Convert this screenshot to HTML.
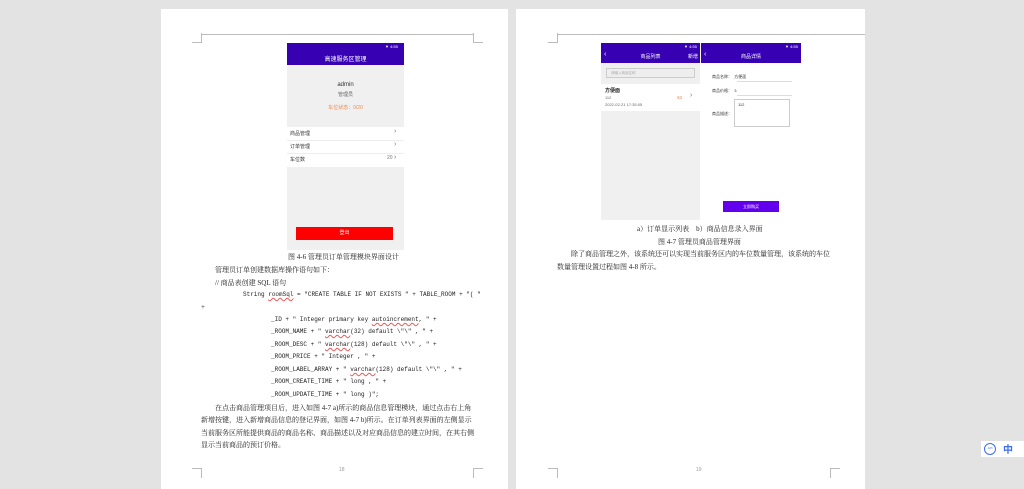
<!DOCTYPE html>
<html><head><meta charset="utf-8"><style>
*{margin:0;padding:0;box-sizing:border-box}
body{width:1024px;height:483px;background:#e3e3e3;position:relative;overflow:hidden;font-family:"Liberation Sans","Noto Sans CJK SC",sans-serif}
.pg{position:absolute;background:#fff;top:9px;height:480px}
.a{position:absolute;white-space:nowrap}
.t{font-family:"Liberation Serif","Noto Serif CJK SC",serif;font-size:7px;color:#222}
.c{font-family:"Liberation Mono","Noto Serif CJK SC",monospace;font-size:6px;color:#222}
.hl{position:absolute;height:1px;background:#bbb}
.cm{position:absolute;width:10px;height:10px;border-color:#bbb;border-style:solid;border-width:0}
.red{text-decoration:underline wavy #e55;}
</style></head><body>
<div class="pg" style="left:161px;width:347px"></div>
<div class="pg" style="left:516px;width:349px"></div>
<div class="hl" style="left:201px;top:34px;width:273px"></div>
<div class="cm" style="left:192px;top:33px;border-right-width:1px;border-bottom-width:1px"></div>
<div class="cm" style="left:473px;top:33px;border-left-width:1px;border-bottom-width:1px"></div>
<div class="cm" style="left:192px;top:468px;border-top-width:1px;border-right-width:1px"></div>
<div class="cm" style="left:473px;top:468px;border-top-width:1px;border-left-width:1px"></div>
<div class="a" style="left:339px;top:467px;font-size:5px;color:#999">18</div>
<div class="a" style="left:287px;top:43px;width:117px;height:207px;background:#f0f0f0"></div>
<div class="a" style="left:287px;top:43px;width:117px;height:22px;background:#3700b3"></div>
<div class="a" style="left:385px;top:44px;font-size:4px;color:#fff">▼ 4:55</div>
<div class="a" style="left:287px;top:54px;width:117px;text-align:center;font-size:6px;color:#fff">高速服务区管理</div>
<div class="a" style="left:287px;top:82px;width:117px;text-align:center;font-size:6px;color:#333">admin</div>
<div class="a" style="left:287px;top:91px;width:117px;text-align:center;font-size:5px;color:#666">管理员</div>
<div class="a" style="left:287px;top:104px;width:117px;text-align:center;font-size:5px;color:#f08a4b">车位状态：0/20</div>
<div class="a" style="left:287px;top:127px;width:117px;height:40px;background:#fff"></div>
<div class="a" style="left:287px;top:140px;width:117px;height:1px;background:#eee"></div>
<div class="a" style="left:287px;top:153px;width:117px;height:1px;background:#eee"></div>
<div class="a" style="left:290px;top:130px;font-size:5px;color:#333">商品管理</div>
<div class="a" style="left:290px;top:143px;font-size:5px;color:#333">订单管理</div>
<div class="a" style="left:290px;top:156px;font-size:5px;color:#333">车位数</div>
<div class="a" style="left:394px;top:128px;font-size:7px;color:#777">›</div>
<div class="a" style="left:394px;top:141px;font-size:7px;color:#777">›</div>
<div class="a" style="left:387px;top:155px;font-size:5px;color:#777">20</div>
<div class="a" style="left:394px;top:154px;font-size:7px;color:#777">›</div>
<div class="a" style="left:296px;top:227px;width:97px;height:13px;background:#f00;color:#fff;font-size:5px;text-align:center;line-height:13px">登出</div>
<div class="a t" style="left:288px;top:252px">图 4-6 管理员订单管理模块界面设计</div>
<div class="a t" style="left:215px;top:265px">管理员订单创建数据库操作语句如下：</div>
<div class="a t" style="left:215px;top:278px">// 商品表创建 SQL 语句</div>
<div class="a c" style="left:243px;top:291px">String <span class="red">roomSql</span> = "CREATE TABLE IF NOT EXISTS " + TABLE_ROOM + "( "</div>
<div class="a t" style="left:201px;top:303px">+</div>
<div class="a c" style="left:271px;top:316px">_ID + " Integer primary key <span class="red">autoincrement</span>, " +</div>
<div class="a c" style="left:271px;top:328px">_ROOM_NAME + " <span class="red">varchar</span>(32) default \"\" , " +</div>
<div class="a c" style="left:271px;top:341px">_ROOM_DESC + " <span class="red">varchar</span>(128) default \"\" , " +</div>
<div class="a c" style="left:271px;top:353px">_ROOM_PRICE + " Integer , " +</div>
<div class="a c" style="left:271px;top:366px">_ROOM_LABEL_ARRAY + " <span class="red">varchar</span>(128) default \"\" , " +</div>
<div class="a c" style="left:271px;top:378px">_ROOM_CREATE_TIME + " long , " +</div>
<div class="a c" style="left:271px;top:391px">_ROOM_UPDATE_TIME + " long )";</div>
<div class="a t" style="left:215px;top:403px">在点击商品管理项目后，进入如图 4-7 a)所示的商品信息管理模块，通过点击右上角</div>
<div class="a t" style="left:201px;top:415px">新增按键，进入新增商品信息的登记界面，如图 4-7 b)所示。在订单列表界面的左侧显示</div>
<div class="a t" style="left:201px;top:428px">当前服务区所能提供商品的商品名称、商品描述以及对应商品信息的建立时间，在其右侧</div>
<div class="a t" style="left:201px;top:440px">显示当前商品的预订价格。</div>
<div class="hl" style="left:557px;top:34px;width:308px"></div>
<div class="cm" style="left:548px;top:33px;border-right-width:1px;border-bottom-width:1px"></div>
<div class="cm" style="left:548px;top:468px;border-top-width:1px;border-right-width:1px"></div>
<div class="cm" style="left:830px;top:468px;border-top-width:1px;border-left-width:1px"></div>
<div class="a" style="left:696px;top:467px;font-size:5px;color:#999">19</div>
<div class="a" style="left:601px;top:43px;width:99px;height:177px;background:#f0f0f0"></div>
<div class="a" style="left:601px;top:43px;width:99px;height:20px;background:#3700b3"></div>
<div class="a" style="left:684px;top:44px;font-size:4px;color:#fff">▼ 4:55</div>
<div class="a" style="left:604px;top:51px;font-size:7px;color:#fff">‹</div>
<div class="a" style="left:601px;top:53px;width:99px;text-align:center;font-size:5px;color:#fff">商品列表</div>
<div class="a" style="left:688px;top:53px;font-size:5px;color:#fff">新增</div>
<div class="a" style="left:606px;top:68px;width:89px;height:10px;border:1px solid #ccc;background:#eee;font-size:3.5px;color:#aaa;padding:2px 4px">请输入商品名称</div>
<div class="a" style="left:601px;top:84px;width:99px;height:27px;background:#fff"></div>
<div class="a" style="left:605px;top:87px;font-size:5px;color:#222;font-weight:bold">方便面</div>
<div class="a" style="left:605px;top:95px;font-size:4px;color:#666">112</div>
<div class="a" style="left:605px;top:102px;font-size:4px;color:#666">2022-02-21 17:35:05</div>
<div class="a" style="left:677px;top:95px;font-size:4.5px;color:#f08a4b">¥3</div>
<div class="a" style="left:690px;top:92px;font-size:7px;color:#777">›</div>
<div class="a" style="left:701px;top:43px;width:100px;height:20px;background:#3700b3"></div>
<div class="a" style="left:785px;top:44px;font-size:4px;color:#fff">▼ 4:55</div>
<div class="a" style="left:704px;top:51px;font-size:7px;color:#fff">‹</div>
<div class="a" style="left:701px;top:53px;width:100px;text-align:center;font-size:5px;color:#fff">商品详情</div>
<div class="a" style="left:712px;top:74px;font-size:4px;color:#333">商品名称：&nbsp; 方便面</div>
<div class="a" style="left:737px;top:81px;width:55px;height:1px;background:#ddd"></div>
<div class="a" style="left:712px;top:88px;font-size:4px;color:#333">商品价格：&nbsp; 3</div>
<div class="a" style="left:737px;top:95px;width:55px;height:1px;background:#ddd"></div>
<div class="a" style="left:712px;top:111px;font-size:4px;color:#333">商品描述：</div>
<div class="a" style="left:734px;top:99px;width:56px;height:28px;border:1px solid #ccc;font-size:4px;color:#333;padding:2px 3px">112</div>
<div class="a" style="left:723px;top:201px;width:56px;height:11px;background:#6200ee;color:#fff;font-size:4px;text-align:center;line-height:11px">立即购买</div>
<div class="a t" style="left:637px;top:224px">a）订单显示列表　b）商品信息录入界面</div>
<div class="a t" style="left:658px;top:237px">图 4-7 管理员商品管理界面</div>
<div class="a t" style="left:571px;top:249px">除了商品管理之外，该系统还可以实现当前服务区内的车位数量管理，该系统的车位</div>
<div class="a t" style="left:557px;top:262px">数量管理设置过程如图 4-8 所示。</div>
<div class="a" style="left:981px;top:441px;width:43px;height:16px;background:#fff"></div>
<div class="a" style="left:984px;top:443px;width:12px;height:12px;border:1.5px solid #3b6ef5;border-radius:50%;font-size:3px;color:#3b6ef5;text-align:center;line-height:9px">API</div>
<div class="a" style="left:1003px;top:441px;font-size:10px;color:#3b6ef5;font-weight:bold">中</div>
</body></html>
